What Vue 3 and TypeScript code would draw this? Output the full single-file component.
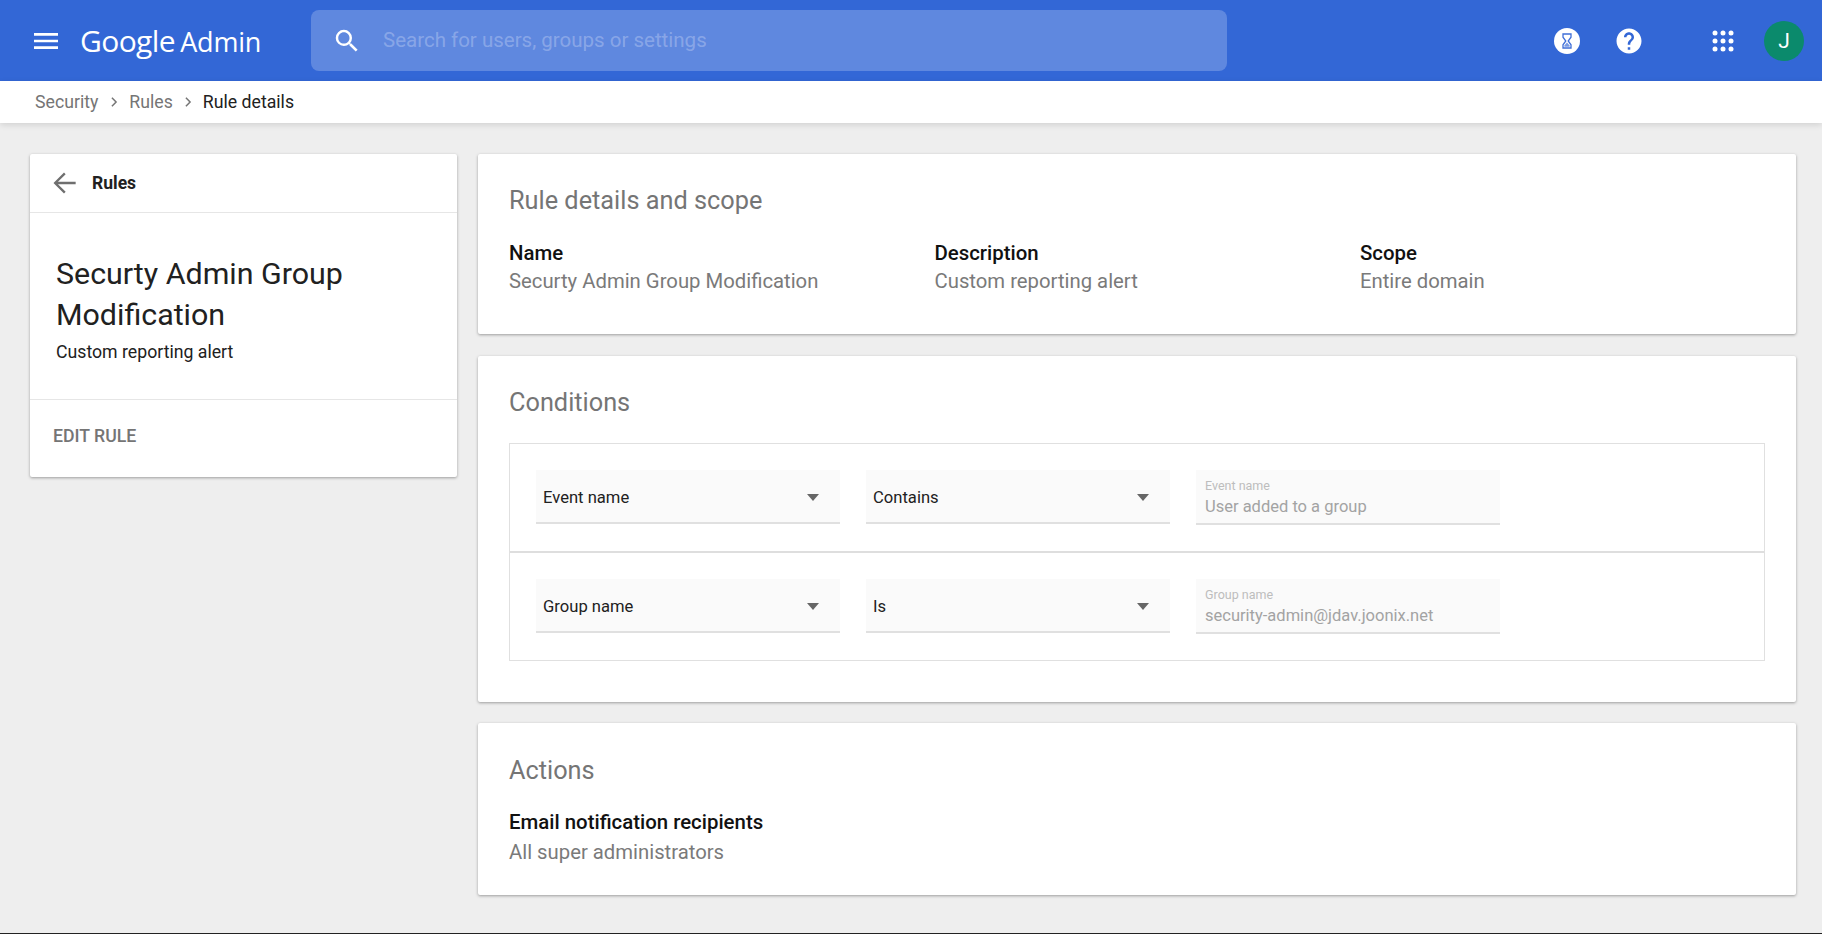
<script setup lang="ts">
interface Detail { label: string; value: string }
interface Condition { attr: string; op: string; label: string; value: string }
const details: Detail[] = [
  { label: 'Name', value: 'Securty Admin Group Modification' },
  { label: 'Description', value: 'Custom reporting alert' },
  { label: 'Scope', value: 'Entire domain' },
]
const conditions: Condition[] = [
  { attr: 'Event name', op: 'Contains', label: 'Event name', value: 'User added to a group' },
  { attr: 'Group name', op: 'Is', label: 'Group name', value: 'security-admin@jdav.joonix.net' },
]
</script>

<template>
  <div class="page">
    <header class="topbar">
      <svg class="menu" viewBox="0 0 24 24" width="32" height="32"><path fill="#fff" d="M3 18h18v-2H3v2zm0-5h18v-2H3v2zm0-7v2h18V6H3z"/></svg>
      <div class="logo"><span class="g">Google</span> <span class="a">Admin</span></div>
      <div class="search">
        <svg viewBox="0 0 24 24" width="30" height="30"><path fill="#fff" d="M15.5 14h-.79l-.28-.27A6.47 6.47 0 0 0 16 9.5 6.5 6.5 0 1 0 9.5 16c1.61 0 3.09-.59 4.23-1.57l.27.28v.79l5 4.99L20.49 19l-4.99-5zm-6 0C7.01 14 5 11.99 5 9.5S7.01 5 9.5 5 14 7.01 14 9.5 11.99 14 9.5 14z"/></svg>
        <span class="placeholder">Search for users, groups or settings</span>
      </div>
      <div class="spacer"></div>
      <svg class="tool hour" viewBox="0 0 26 26" width="26" height="26">
        <circle cx="13" cy="13" r="13" fill="#fff"/>
        <path fill="none" stroke="#3f6fd8" stroke-width="1.3" d="M9 6h8v3.2L14.2 13l2.8 3.8V20H9v-3.2l2.8-3.8L9 9.2z"/>
        <path fill="#3f6fd8" opacity="0.7" d="M10.4 18.8v-1.4L13 14.4l2.6 3v1.4z"/>
      </svg>
      <svg class="tool help" viewBox="0 0 24 24" width="30" height="30"><path fill="#fff" d="M12 2C6.48 2 2 6.48 2 12s4.48 10 10 10 10-4.48 10-10S17.52 2 12 2zm1 17h-2v-2h2v2zm2.07-7.75-.9.92C13.45 12.9 13 13.5 13 15h-2v-.5c0-1.1.45-2.1 1.17-2.83l1.24-1.26c.37-.36.59-.86.59-1.41 0-1.1-.9-2-2-2s-2 .9-2 2H8c0-2.21 1.79-4 4-4s4 1.79 4 4c0 .88-.36 1.68-.93 2.25z"/></svg>
      <svg class="tool apps" viewBox="0 0 22 22" width="22" height="22">
        <g fill="#fff">
          <circle cx="3" cy="3" r="2.5"/><circle cx="11" cy="3" r="2.5"/><circle cx="19" cy="3" r="2.5"/>
          <circle cx="3" cy="11" r="2.5"/><circle cx="11" cy="11" r="2.5"/><circle cx="19" cy="11" r="2.5"/>
          <circle cx="3" cy="19" r="2.5"/><circle cx="11" cy="19" r="2.5"/><circle cx="19" cy="19" r="2.5"/>
        </g>
      </svg>
      <div class="avatar">J</div>
    </header>

    <nav class="crumbs">
      <span class="crumb">Security</span>
      <svg viewBox="0 0 24 24" width="20" height="20"><path fill="none" stroke="#757575" stroke-width="1.8" d="M9.5 7l5 5-5 5"/></svg>
      <span class="crumb">Rules</span>
      <svg viewBox="0 0 24 24" width="20" height="20"><path fill="none" stroke="#757575" stroke-width="1.8" d="M9.5 7l5 5-5 5"/></svg>
      <span class="crumb current">Rule details</span>
    </nav>

    <main class="main">
      <aside class="card side">
        <div class="side-head">
          <svg viewBox="0 0 24 24" width="28" height="28"><path fill="#6f6f6f" d="M22 11H6.83l6.58-6.59L12 3 3 12l9 9 1.41-1.41L6.83 13H22z"/></svg>
          <span>Rules</span>
        </div>
        <div class="side-body">
          <h1>Securty Admin Group Modification</h1>
          <p>Custom reporting alert</p>
        </div>
        <div class="side-foot">EDIT RULE</div>
      </aside>

      <section class="content">
        <div class="card panel first">
          <h2>Rule details and scope</h2>
          <div class="details">
            <div v-for="d in details" :key="d.label">
              <div class="label">{{ d.label }}</div>
              <div class="value">{{ d.value }}</div>
            </div>
          </div>
        </div>

        <div class="card panel second">
          <h2>Conditions</h2>
          <div class="table">
            <div v-for="c in conditions" :key="c.attr" class="row">
              <div class="select">
                <span>{{ c.attr }}</span><i class="caret"></i>
              </div>
              <div class="select">
                <span>{{ c.op }}</span><i class="caret"></i>
              </div>
              <div class="field">
                <small>{{ c.label }}</small>
                <span>{{ c.value }}</span>
              </div>
            </div>
          </div>
        </div>

        <div class="card panel third">
          <h2>Actions</h2>
          <div class="label">Email notification recipients</div>
          <div class="value">All super administrators</div>
        </div>
      </section>
    </main>
  </div>
</template>

<style>
html, body { margin: 0; padding: 0; background: #eeeeee; }
</style>

<style scoped>
.page {
  height: 933px;
  border-bottom: 1px solid #222;
  background: #eeeeee;
  font-family: Roboto, "Liberation Sans", sans-serif;
  overflow: hidden;
}
.topbar {
  height: 81px;
  background: #3367d6;
  display: flex;
  align-items: center;
  padding-right: 18px;
}
.menu { margin-left: 30px; flex: none; }
.logo {
  margin-left: 18px;
  width: 201px;
  color: #fff;
  font-family: "Open Sans", sans-serif;
  font-size: 30px;
  white-space: nowrap;
  letter-spacing: -0.6px;
  flex: none;
}
.logo .a { font-size: 27px; font-weight: 400; letter-spacing: -0.2px; margin-left: -2px; }
.search {
  margin-left: 30px;
  width: 916px;
  height: 61px;
  border-radius: 8px;
  background: rgba(255, 255, 255, 0.22);
  display: flex;
  align-items: center;
  box-sizing: border-box;
  padding-left: 21px;
  flex: none;
}
.placeholder {
  margin-left: 21px;
  padding-bottom: 2px;
  font-size: 20.5px;
  color: rgba(255, 255, 255, 0.27);
}
.spacer { flex: 1; }
.tool { flex: none; }
.help { margin-left: 34px; }
.apps { margin-left: 68px; }
.avatar {
  margin-left: 30px;
  width: 40px;
  height: 40px;
  border-radius: 50%;
  background: #0b8a6c;
  color: #fff;
  font-size: 21px;
  display: flex;
  align-items: center;
  justify-content: center;
}
.crumbs {
  height: 42px;
  box-sizing: border-box;
  padding-bottom: 1px;
  background: #fff;
  box-shadow: 0 2px 6px rgba(0, 0, 0, 0.12);
  display: flex;
  align-items: center;
  padding-left: 35px;
  font-size: 17.7px;
  position: relative;
}
.crumbs svg { margin: 0 5px; }
.crumb:first-child { margin-right: 1px; }
.crumb { color: #757575; }
.current { color: #212121; }
.main {
  display: flex;
  gap: 21px;
  padding: 31px 25px 0 30px;
}
.card {
  background: #fff;
  box-shadow: 0 1px 3px rgba(0, 0, 0, 0.35);
  border-radius: 2px;
}
.side { width: 427px; height: 323px; flex: none; }
.side-head {
  height: 59px;
  box-sizing: border-box;
  border-bottom: 1px solid #e6e6e6;
  display: flex;
  align-items: center;
  padding-left: 20px;
  font-size: 17.5px;
  font-weight: 700;
  color: #212121;
  gap: 14px;
}
.side-body {
  height: 187px;
  box-sizing: border-box;
  padding: 41px 24px 0 26px;
  border-bottom: 1px solid #e6e6e6;
}
h1 {
  margin: 0;
  font-size: 30.4px;
  font-weight: 400;
  line-height: 40.5px;
  color: #212121;
}
p {
  margin: 5px 0 0;
  font-size: 17.7px;
  line-height: 24px;
  color: #212121;
}
.side-foot {
  padding: 26px 0 0 23px;
  font-size: 17.7px;
  font-weight: 500;
  color: #757575;
}
.content {
  width: 1318px;
  flex: none;
  display: flex;
  flex-direction: column;
}
.panel { padding-left: 31px; padding-right: 31px; box-sizing: border-box; }
.first { height: 180px; padding-top: 31px; margin-bottom: 22px; }
.second { height: 346px; padding-top: 31px; margin-bottom: 21px; }
.third { height: 172px; padding-top: 32px; }
h2 {
  margin: 0;
  font-size: 25.3px;
  font-weight: 400;
  line-height: 32px;
  color: #757575;
}
.details {
  margin-top: 22px;
  display: grid;
  grid-template-columns: repeat(3, 425.5px);
}
.label {
  font-size: 20.4px;
  font-weight: 500;
  line-height: 28px;
  color: #111;
}
.value {
  font-size: 20.3px;
  line-height: 28px;
  color: #7a7a7a;
}
.third .label { margin-top: 21px; }
.third .value { margin-top: 2px; }
.table {
  margin-top: 24px;
  height: 218px;
  box-sizing: border-box;
  border: 1px solid #e0e0e0;
  display: flex;
  flex-direction: column;
}
.row {
  flex: 1;
  display: flex;
  gap: 26px;
  padding: 26px 0 0 26px;
}
.row + .row { border-top: 2px solid #dedede; }
.select, .field {
  width: 304px;
  height: 54px;
  box-sizing: border-box;
  background: #fafafa;
  border-bottom: 2px solid #e0e0e0;
}
.select {
  display: flex;
  align-items: center;
  justify-content: space-between;
  padding: 3px 21px 0 7px;
  font-size: 16.6px;
  color: #212121;
}
.caret {
  width: 0;
  height: 0;
  margin-top: -1px;
  border-left: 6.5px solid transparent;
  border-right: 6.5px solid transparent;
  border-top: 7px solid #666;
}
.field {
  height: 55px;
  padding: 8px 0 0 9px;
  display: flex;
  flex-direction: column;
}
.field small {
  font-size: 12.5px;
  line-height: 15px;
  color: #bdbdbd;
}
.field span {
  margin-top: 4px;
  font-size: 16.5px;
  line-height: 20px;
  color: #a3a3a3;
}
</style>
